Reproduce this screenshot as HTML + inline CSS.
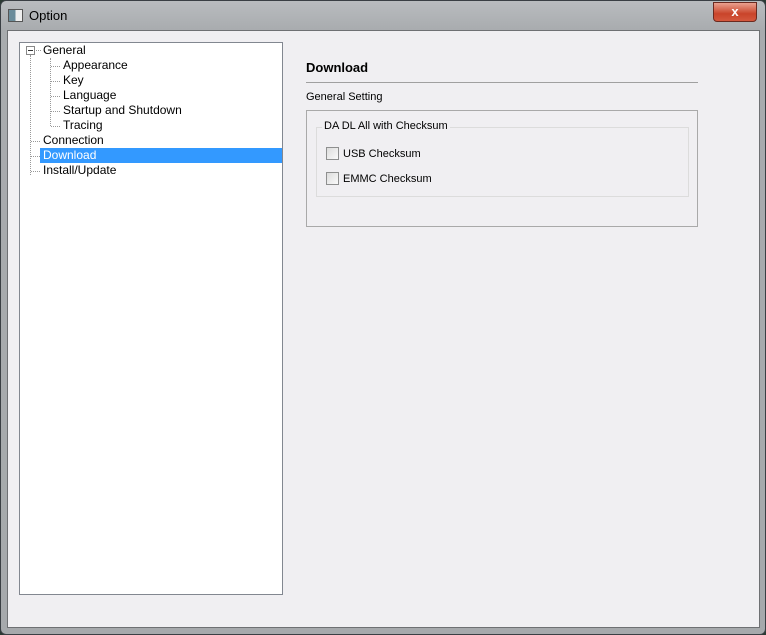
<!DOCTYPE html>
<html><head><style>
body{margin:0;width:766px;height:635px;background:#2b3a33;overflow:hidden;font-family:"Liberation Sans",sans-serif;}
.frame{position:absolute;left:0;top:0;width:764px;height:633px;border:1px solid #3a3f44;border-radius:6px;background:linear-gradient(180deg,#b9bcbf 0,#a8abae 30px,#a6a9ac 100%);}
.title{position:absolute;left:29px;top:8px;font-size:13px;color:#000;}
.icon{position:absolute;left:8px;top:9px;width:13px;height:11px;border:1px solid #555;background:linear-gradient(90deg,#6b8c9a 50%,#eee 50%);}
.close{position:absolute;left:713px;top:2px;width:42px;height:18px;border:1px solid #6b2a20;border-radius:0 0 4px 4px;background:linear-gradient(180deg,#e9a18f,#c9442a 60%,#d4583e);color:#fff;font-weight:bold;font-size:13px;text-align:center;line-height:17px;}
.client{position:absolute;left:7px;top:30px;width:751px;height:596px;background:#f0eff2;border:1px solid #6e7073;}
.tree{position:absolute;left:19px;top:42px;width:262px;height:551px;background:#fff;border:1px solid #828790;}
.row{position:absolute;font-size:12px;color:#000;height:15px;line-height:15px;}
.sel{position:absolute;left:40px;top:148px;width:242px;height:15px;background:#3399ff;}
.dv{position:absolute;border-left:1px dotted #999;}
.dh{position:absolute;border-top:1px dotted #999;}
.t{position:absolute;font-size:12px;color:#000;}
</style></head><body>
<div class="frame"></div>
<div class="icon"></div>
<div class="title">Option</div>
<div class="close">x</div>
<div class="client"></div>
<div class="tree"></div>
<div class="sel"></div>
<div style="position:absolute;left:26px;top:46px;width:7px;height:7px;border:1px solid #888;background:#fff;"></div>
<div style="position:absolute;left:28px;top:50px;width:5px;height:1px;background:#333;"></div>
<div class="dv" style="left:30px;top:55px;height:120px"></div>
<div class="dh" style="left:31px;top:141px;width:9px"></div>
<div class="dh" style="left:31px;top:156px;width:9px"></div>
<div class="dh" style="left:31px;top:171px;width:9px"></div>
<div class="dh" style="left:36px;top:50px;width:5px"></div>
<div class="dv" style="left:50px;top:58px;height:68px"></div>
<div class="dh" style="left:51px;top:66px;width:9px"></div>
<div class="dh" style="left:51px;top:81px;width:9px"></div>
<div class="dh" style="left:51px;top:96px;width:9px"></div>
<div class="dh" style="left:51px;top:111px;width:9px"></div>
<div class="dh" style="left:51px;top:126px;width:9px"></div>
<div class="row" style="left:43px;top:43px">General</div>
<div class="row" style="left:63px;top:58px">Appearance</div>
<div class="row" style="left:63px;top:73px">Key</div>
<div class="row" style="left:63px;top:88px">Language</div>
<div class="row" style="left:63px;top:103px">Startup and Shutdown</div>
<div class="row" style="left:63px;top:118px">Tracing</div>
<div class="row" style="left:43px;top:133px">Connection</div>
<div class="row" style="left:43px;top:148px;color:#fff">Download</div>
<div class="row" style="left:43px;top:163px">Install/Update</div>
<div class="t" style="left:306px;top:60px;font-weight:bold;font-size:13px">Download</div>
<div style="position:absolute;left:306px;top:82px;width:392px;height:1px;background:#a0a0a0"></div>
<div class="t" style="left:306px;top:91px;font-size:11px">General Setting</div>
<div style="position:absolute;left:306px;top:110px;width:390px;height:115px;border:1px solid #a9a9a9"></div>
<div style="position:absolute;left:316px;top:127px;width:371px;height:68px;border:1px solid #dcdcdc"></div>
<div class="t" style="left:322px;top:120px;font-size:11px;background:#f0eff2;padding:0 2px">DA DL All with Checksum</div>
<div style="position:absolute;left:326px;top:147px;width:11px;height:11px;border:1px solid #8e8f8f;background:linear-gradient(135deg,#dcdcdc,#fafafa)"></div>
<div class="t" style="left:343px;top:148px;font-size:11px">USB Checksum</div>
<div style="position:absolute;left:326px;top:172px;width:11px;height:11px;border:1px solid #8e8f8f;background:linear-gradient(135deg,#dcdcdc,#fafafa)"></div>
<div class="t" style="left:343px;top:173px;font-size:11px">EMMC Checksum</div>
</body></html>
